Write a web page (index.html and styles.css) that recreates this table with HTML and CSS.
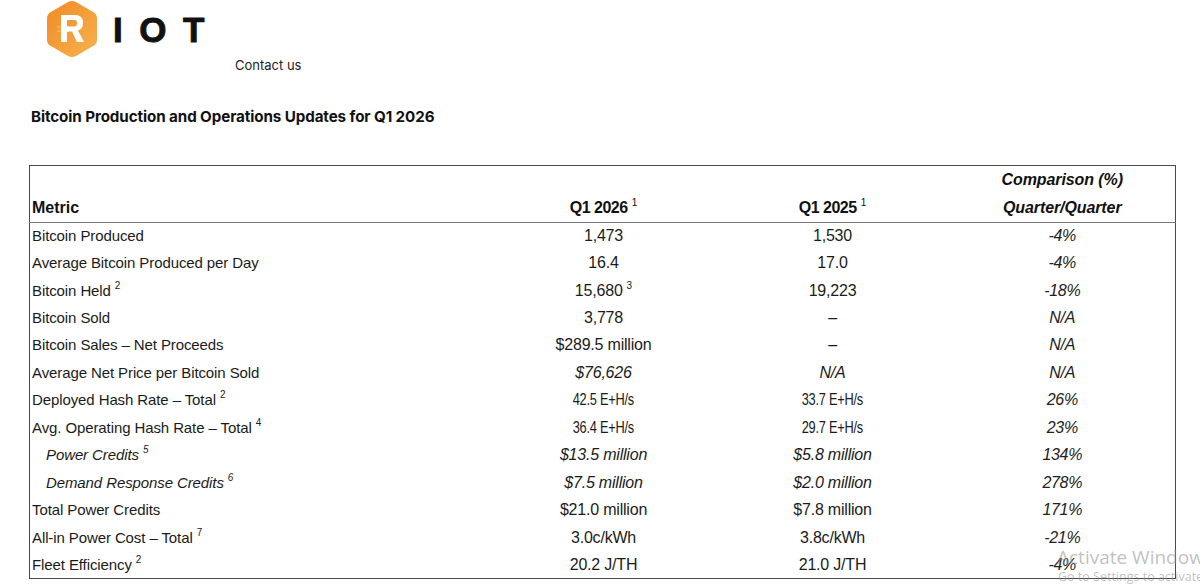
FILE: index.html
```html
<!DOCTYPE html>
<html>
<head>
<meta charset="utf-8">
<link rel="stylesheet" href="styles.css">
</head>
<body>
<header class="top">
  <div class="logo">
    <svg class="hex" width="52" height="58" viewBox="0 0 52 58">
      <defs>
        <linearGradient id="g" x1="0" y1="0" x2="1" y2="1">
          <stop offset="0" stop-color="#f08a24"/>
          <stop offset="1" stop-color="#f6b350"/>
        </linearGradient>
      </defs>
      <path d="M22 2 Q26 0 30 2 L48 12.5 Q51 14.5 51 18.5 L51 39.5 Q51 43.5 48 45.5 L30 56 Q26 58 22 56 L4 45.5 Q1 43.5 1 39.5 L1 18.5 Q1 14.5 4 12.5 Z" fill="url(#g)"/>
      <path d="M15 15 H29 Q37 15 37 23 Q37 29 32 30.5 L38 42 H31 L26 31.5 H21 V42 H15 Z M21 20 V26.5 H28.5 Q31 26.5 31 23.2 Q31 20 28.5 20 Z" fill="#fff"/>
      <rect x="11" y="26.5" width="12" height="5" fill="#fff"/>
      <rect x="11" y="26.5" width="4" height="5" fill="#f3a040"/>
    </svg>
    <span class="wordmark">IOT</span>
  </div>
  <nav class="nav"><a href="#">Contact us</a></nav>
</header>

<h1 class="title">Bitcoin Production and Operations Updates for Q1 2026</h1>

<table class="data">
  <colgroup>
    <col class="c1"><col class="c2"><col class="c3"><col class="c4">
  </colgroup>
  <thead>
    <tr class="h1row">
      <th></th><th></th><th></th><th class="cmp">Comparison (%)</th>
    </tr>
    <tr class="h2row">
      <th class="metric">Metric</th>
      <th class="num">Q1 2026<sup>1</sup></th>
      <th class="num">Q1 2025<sup>1</sup></th>
      <th class="cmp">Quarter/Quarter</th>
    </tr>
  </thead>
  <tbody>
    <tr><td>Bitcoin Produced</td><td>1,473</td><td>1,530</td><td class="pct">-4%</td></tr>
    <tr><td>Average Bitcoin Produced per Day</td><td>16.4</td><td>17.0</td><td class="pct">-4%</td></tr>
    <tr><td>Bitcoin Held<sup>2</sup></td><td>15,680<sup>3</sup></td><td>19,223</td><td class="pct">-18%</td></tr>
    <tr><td>Bitcoin Sold</td><td>3,778</td><td>–</td><td class="pct">N/A</td></tr>
    <tr><td>Bitcoin Sales – Net Proceeds</td><td>$289.5 million</td><td>–</td><td class="pct">N/A</td></tr>
    <tr><td>Average Net Price per Bitcoin Sold</td><td class="it">$76,626</td><td class="it">N/A</td><td class="pct">N/A</td></tr>
    <tr><td>Deployed Hash Rate – Total<sup>2</sup></td><td><span class="nr">42.5 E+H/s</span></td><td><span class="nr">33.7 E+H/s</span></td><td class="pct">26%</td></tr>
    <tr><td>Avg. Operating Hash Rate – Total<sup>4</sup></td><td><span class="nr">36.4 E+H/s</span></td><td><span class="nr">29.7 E+H/s</span></td><td class="pct">23%</td></tr>
    <tr><td class="sub">Power Credits<sup>5</sup></td><td class="it">$13.5 million</td><td class="it">$5.8 million</td><td class="pct">134%</td></tr>
    <tr><td class="sub">Demand Response Credits<sup>6</sup></td><td class="it">$7.5 million</td><td class="it">$2.0 million</td><td class="pct">278%</td></tr>
    <tr><td>Total Power Credits</td><td>$21.0 million</td><td>$7.8 million</td><td class="pct">171%</td></tr>
    <tr><td>All-in Power Cost – Total<sup>7</sup></td><td>3.0c/kWh</td><td>3.8c/kWh</td><td class="pct">-21%</td></tr>
    <tr><td>Fleet Efficiency<sup>2</sup></td><td>20.2 J/TH</td><td>21.0 J/TH</td><td class="pct">-4%</td></tr>
  </tbody>
</table>

<div class="watermark">
  <div class="wm1">Activate Windows</div>
  <div class="wm2">Go to Settings to activate Windows.</div>
</div>
</body>
</html>
```
FILE: styles.css
```css
html, body {
  margin: 0;
  padding: 0;
  background: #fff;
  color: #1b1b1b;
  font-family: "Liberation Sans", Arial, sans-serif;
  overflow: hidden;
  width: 1200px;
  height: 588px;
}

.top {
  display: flex;
  flex-direction: column;
  padding-left: 46px;
}

.logo {
  display: flex;
  align-items: center;
  height: 58px;
  gap: 15px;
}

.hex {
  display: block;
}

.wordmark {
  font-family: "Liberation Sans", Arial, sans-serif;
  font-weight: 700;
  font-size: 35px;
  letter-spacing: 16.5px;
  color: #111;
  line-height: 1;
  -webkit-text-stroke: 0.9px #111;
}

.nav {
  padding-left: 189px;
  margin-top: -2px;
}

.nav a {
  font-family: Inter, "Noto Sans", sans-serif;
  font-size: 13px;
  color: #222;
  text-decoration: none;
  line-height: 16px;
}

.title {
  font-family: Inter, "Noto Sans", sans-serif;
  font-weight: 700;
  font-size: 15.2px;
  letter-spacing: -0.1px;
  color: #111;
  margin: 33px 0 0 31px;
  line-height: 20px;
}

.data {
  margin: 38px 0 0 29px;
  width: 1146px;
  border-collapse: collapse;
  border: 1px solid #4a4a4a;
  table-layout: fixed;
  font-size: 16px;
}

.c1 { width: 462px; }
.c2 { width: 224px; }
.c3 { width: 234px; }
.c4 { width: 226px; }

.data th {
  font-weight: 700;
  padding: 0;
  line-height: 20px;
  text-align: center;
  font-size: 16px;
  letter-spacing: -0.5px;
  color: #111;
  vertical-align: middle;
}

.h1row th { height: 27.5px; }

.h2row th {
  border-bottom: 1px solid #777;
  height: 28px;
}

.data th.metric {
  text-align: left;
  padding-left: 2px;
  letter-spacing: 0;
}

.data th.cmp {
  font-style: italic;
  letter-spacing: -0.1px;
}

.data tbody tr { height: 27.45px; }

.data td {
  padding: 0;
  line-height: 20px;
  text-align: center;
  vertical-align: middle;
  white-space: nowrap;
  letter-spacing: -0.2px;
}

.data td:first-child {
  text-align: left;
  padding-left: 2px;
  font-size: 15px;
  letter-spacing: -0.1px;
}

.data td.sub {
  padding-left: 16px;
  font-style: italic;
}

.data td.it { font-style: italic; }

.data td.pct {
  font-style: italic;
  letter-spacing: -0.3px;
  color: #222;
}

.nr {
  display: inline-block;
  transform: scaleX(0.8);
  letter-spacing: -0.3px;
}

sup {
  font-size: 10px;
  line-height: 0;
  vertical-align: 0;
  position: relative;
  top: -7px;
  margin-left: 4px;
  letter-spacing: 0;
  font-family: "Liberation Sans", Arial, sans-serif;
}

th sup {
  font-weight: 400;
}

.watermark {
  position: absolute;
  left: 1057px;
  right: 0;
  top: 545px;
  overflow: hidden;
  font-family: "Open Sans", "Noto Sans", sans-serif;
  color: rgba(140, 140, 140, 0.55);
  white-space: nowrap;
}

.wm1 {
  font-size: 19px;
  line-height: 24px;
}

.wm2 {
  font-size: 12.5px;
  line-height: 16px;
  margin-left: 1px;
}
```
